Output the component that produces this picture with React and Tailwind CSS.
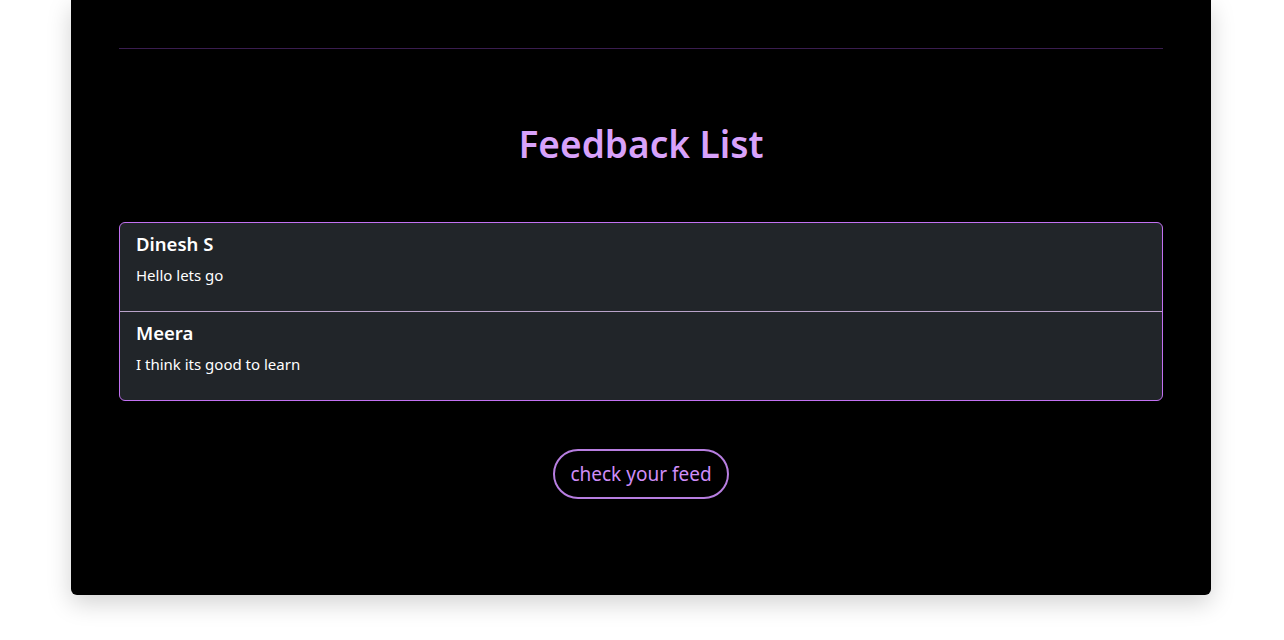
import React from "react";

const feedbacks = [
  { name: "Dinesh S", text: "Hello lets go" },
  { name: "Meera", text: "I think its good to learn" },
];

const App = () => {
  return (
    <div
      className="min-h-screen bg-white"
      style={{ fontFamily: '"Noto Sans", "Open Sans", sans-serif' }}
    >
      <div className="mx-[71px] w-[1140px] rounded-b-md bg-black px-12 pt-12 pb-[96px] shadow-[0_8px_24px_rgba(0,0,0,0.18)]">
        <div className="border-t border-[#3a1d50]" />

        <h2 className="mt-[73px] text-center text-[37px] leading-[44px] font-semibold text-[#d8a2fb]">
          Feedback List
        </h2>

        <ul className="mt-[56px] overflow-hidden rounded-md border border-[#c271f2] bg-[#212529]">
          {feedbacks.map((f, i) => (
            <li
              key={f.name}
              className={`px-4 ${i > 0 ? "h-[89px] border-t border-[#b9a3c9] pt-[9px]" : "h-[88px] pt-[9px]"}`}
            >
              <h5 className="text-[18.5px] leading-6 font-semibold text-white">{f.name}</h5>
              <p className="mt-[7px] text-[15px] leading-6 text-white">{f.text}</p>
            </li>
          ))}
        </ul>

        <div className="mt-[48px] flex justify-center">
          <button className="h-[50px] rounded-full border-2 border-[#b77ee0] px-[15px] text-[19px] text-[#cf8df8]">
            check your feed
          </button>
        </div>
      </div>
    </div>
  );
};

export default App;
